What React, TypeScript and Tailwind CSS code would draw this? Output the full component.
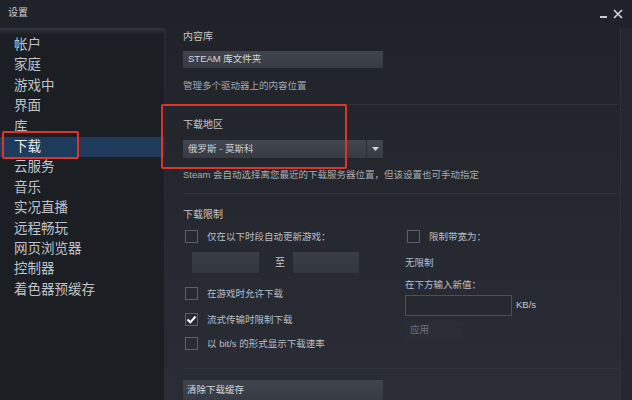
import React from "react";

const font = { fontFamily: '"Liberation Sans", "Noto Sans CJK SC", sans-serif' };

function Check({ checked = false }: { checked?: boolean }) {
  return (
    <div className="w-[13px] h-[13px] border border-[#5b5f67] flex items-center justify-center shrink-0">
      {checked && (
        <svg width="11" height="11" viewBox="0 0 11 11">
          <path d="M1.5 5.5 L4.3 8.3 L9.5 2.5" fill="none" stroke="#ffffff" strokeWidth="2" />
        </svg>
      )}
    </div>
  );
}

function CheckRow({ label, checked, className = "" }: { label: string; checked?: boolean; className?: string }) {
  return (
    <div className={`flex items-center h-[14px] pl-[2px] gap-[9px] ${className}`}>
      <Check checked={checked} />
      <span className="text-[9.5px] leading-[14px] text-[#b9bec5]">{label}</span>
    </div>
  );
}

const items = ["帐户", "家庭", "游戏中", "界面", "库", "下载", "云服务", "音乐", "实况直播", "远程畅玩", "网页浏览器", "控制器", "着色器预缓存"];

export default function App() {
  return (
    <div className="w-[632px] h-[400px] overflow-hidden bg-[#1f2228] flex flex-col relative" style={font}>
      {/* title bar */}
      <div className="h-[28px] flex items-start justify-between pl-[8px] pr-[9px] pt-[7px] shrink-0">
        <span className="text-[10px] leading-[12px] text-[#c9cdd2]">设置</span>
        <div className="flex items-center gap-[6px] text-[#c9cdd2]">
          <div className="w-[7px] h-[2px] bg-[#c9cdd2] mt-[7px]" />
          <svg width="10" height="10" viewBox="0 0 10 10" className="mt-[2px]">
            <path d="M1 1 L9 9 M9 1 L1 9" stroke="#d5d8dc" strokeWidth="1.6" />
          </svg>
        </div>
      </div>
      <div className="flex flex-1 min-h-0">
        {/* sidebar */}
        <div className="w-[166px] shrink-0 flex flex-col bg-[#1b1e23] border-r-[2px] border-[#272a31]">
          <div className="h-[6px] bg-gradient-to-b from-[#31353d] to-[#1e2127]" />
          <div className="pt-[1px] flex flex-col">
            {items.map((it) => (
              <div
                key={it}
                className={`h-[20.4px] leading-[20.4px] pl-[14px] text-[13.5px] ${it === "下载" ? "bg-[#1f3b5c] text-[#e6eaee]" : "text-[#bfc3c9]"}`}
              >
                {it}
              </div>
            ))}
          </div>
        </div>
        {/* content */}
        <div className="flex-1 flex bg-gradient-to-b from-[#202329] to-[#2a2d35]">
          <div className="flex-1 pl-[17px] pr-[2px] pt-[2px] flex flex-col">
            <div className="text-[10px] leading-[14px] text-[#c3c8ce]">内容库</div>
            <div className="mt-[7px] w-[200px] h-[19px] bg-gradient-to-b from-[#41454d] to-[#363a42] flex items-center pl-[5px] text-[9.5px] text-[#d3d7dc]">STEAM 库文件夹</div>
            <div className="mt-[11px] text-[9.5px] leading-[14px] text-[#a1a6ad]">管理多个驱动器上的内容位置</div>
            <div className="mt-[11px] h-[1px] bg-[#30343b]" />
            <div className="mt-[13px] text-[10px] leading-[14px] text-[#c3c8ce]">下载地区</div>
            <div className="mt-[8px] w-[200px] h-[20px] flex bg-gradient-to-b from-[#42464e] to-[#363a42]">
              <div className="flex-1 flex items-center pl-[5px] text-[9.5px] text-[#c9cdd2]">俄罗斯 - 莫斯科</div>
              <div className="w-[1px] bg-[#2a2d33]" />
              <div className="w-[16px] flex items-center justify-center">
                <svg width="7" height="4" viewBox="0 0 7 4"><path d="M0 0 L7 0 L3.5 4 Z" fill="#d0d4d9" /></svg>
              </div>
            </div>
            <div className="mt-[10px] text-[9.5px] leading-[14px] text-[#a6abb2]">Steam 会自动选择离您最近的下载服务器位置，但该设置也可手动指定</div>
            <div className="mt-[11px] h-[1px] bg-[#30343b]" />
            <div className="mt-[14px] text-[10px] leading-[14px] text-[#c3c8ce]">下载限制</div>
            <div className="flex">
              <div className="w-[222px] flex flex-col">
                <CheckRow className="mt-[8px]" label="仅在以下时段自动更新游戏：" />
                <div className="mt-[8px] pl-[9px] flex items-center">
                  <div className="w-[67px] h-[21px] bg-gradient-to-b from-[#393d45] to-[#32363d]" />
                  <span className="ml-[16px] text-[10px] text-[#c3c8ce]">至</span>
                  <div className="ml-[8px] w-[66px] h-[21px] bg-gradient-to-b from-[#393d45] to-[#32363d]" />
                </div>
                <CheckRow className="mt-[14px]" label="在游戏时允许下载" />
                <CheckRow className="mt-[12px]" label="流式传输时限制下载" checked />
                <CheckRow className="mt-[10px]" label="以 bit/s 的形式显示下载速率" />
              </div>
              <div className="flex-1 flex flex-col">
                <CheckRow className="mt-[8px]" label="限制带宽为：" />
                <div className="mt-[12px] text-[9.5px] leading-[14px] text-[#b9bec5]">无限制</div>
                <div className="mt-[8px] text-[9.5px] leading-[14px] text-[#b9bec5]">在下方输入新值：</div>
                <div className="mt-[3px] flex items-center">
                  <div className="w-[107px] h-[21px] border border-[#4c5058] bg-[#262930]" />
                  <span className="ml-[4px] text-[9.5px] text-[#c3c8ce]">KB/s</span>
                </div>
                <div className="mt-[6px] w-[58px] h-[18px] bg-[#2a2d34] flex items-center pl-[5px] text-[9.5px] text-[#6f747b]">应用</div>
              </div>
            </div>
            <div className="mt-[17px] h-[1px] bg-[#30343b]" />
            <div className="mt-[12px] w-[200px] h-[22px] bg-gradient-to-b from-[#40444c] to-[#363a42] flex items-center pl-[4px] text-[9.5px] text-[#d3d7dc]">清除下载缓存</div>
          </div>
          <div className="w-[12px] shrink-0 bg-[#24272e] border-l border-[#2e3139]" />
        </div>
      </div>
      {/* annotation boxes */}
      <div className="absolute left-[2px] top-[131px] w-[77px] h-[28px] border-[2px] border-[#e0332c] rounded-[2px]" />
      <div className="absolute left-[161px] top-[104px] w-[186px] h-[65px] border-[2px] border-[#e0332c] rounded-[2px]" />
    </div>
  );
}
